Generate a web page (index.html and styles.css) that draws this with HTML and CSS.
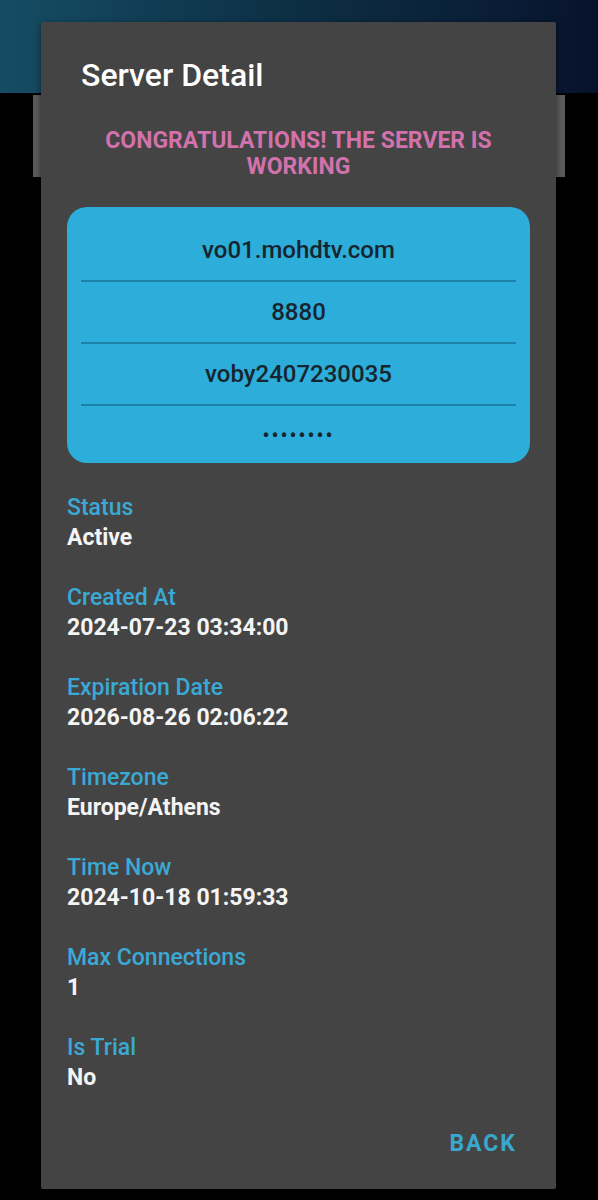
FILE: index.html
```html
<!DOCTYPE html>
<html lang="en">
<head>
    <meta charset="UTF-8">
    <meta name="viewport" content="width=device-width, initial-scale=1.0">
    <title>Server Detail</title>
    <link rel="stylesheet" href="styles.css">
</head>
<body>
    <div class="backdrop">
        <div class="header"></div>
        <div class="behind-card"></div>
    </div>

    <div class="dialog">
        <h1 class="title">Server Detail</h1>
        <p class="success">CONGRATULATIONS! THE SERVER IS WORKING</p>

        <div class="server-box">
            <div class="server-row">vo01.mohdtv.com</div>
            <div class="server-row">8880</div>
            <div class="server-row">voby2407230035</div>
            <div class="server-row password">••••••••</div>
        </div>

        <div class="fields">
            <div class="field">
                <div class="label">Status</div>
                <div class="value">Active</div>
            </div>
            <div class="field">
                <div class="label">Created At</div>
                <div class="value">2024-07-23 03:34:00</div>
            </div>
            <div class="field">
                <div class="label">Expiration Date</div>
                <div class="value">2026-08-26 02:06:22</div>
            </div>
            <div class="field">
                <div class="label">Timezone</div>
                <div class="value">Europe/Athens</div>
            </div>
            <div class="field">
                <div class="label">Time Now</div>
                <div class="value">2024-10-18 01:59:33</div>
            </div>
            <div class="field">
                <div class="label">Max Connections</div>
                <div class="value">1</div>
            </div>
            <div class="field">
                <div class="label">Is Trial</div>
                <div class="value">No</div>
            </div>
        </div>

        <div class="actions">
            <button class="back-btn">BACK</button>
        </div>
    </div>
</body>
</html>
```

FILE: styles.css
```css
body {
    margin: 0;
    background-color: #000;
    font-family: Roboto, "Liberation Sans", sans-serif;
    min-height: 1200px;
}
.header {
    height: 93px;
    background: linear-gradient(90deg, #154d64 0%, #0d3147 45%, #0a1c36 85%, #07122a 100%);
}
.behind-card {
    margin: 2px 33px 0 33px;
    height: 82px;
    background-color: #5a5a5a;
}
.dialog {
    position: absolute;
    top: 22px;
    left: 41px;
    width: 515px;
    box-sizing: border-box;
    padding: 35px 26px 30px 26px;
    background-color: #444444;
    border-radius: 2px;
    box-shadow: 0 2px 6px rgba(0, 0, 0, 0.5);
}
.title {
    margin: 0 0 0 14px;
    font-size: 32px;
    font-weight: 500;
    line-height: 36px;
    color: #fff;
}
.success {
    margin: 35px 0 0 0;
    font-size: 23px;
    font-weight: 700;
    line-height: 26px;
    text-align: center;
    color: #d272ac;
}
.server-box {
    margin-top: 27px;
    background-color: #2cadda;
    border-radius: 20px;
    padding: 13px 14px 0 14px;
}
.server-row {
    height: 60px;
    display: flex;
    align-items: center;
    justify-content: center;
    font-size: 24px;
    font-weight: 500;
    color: #17252e;
    border-bottom: 2px solid #1e82a8;
}
.server-row.password {
    border-bottom: none;
    height: 57px;
    font-size: 20px;
    letter-spacing: 2px;
}
.fields {
    margin-top: 30px;
}
.field {
    margin-bottom: 30px;
}
.field:last-child {
    margin-bottom: 0;
}
.label {
    font-size: 23px;
    font-weight: 500;
    line-height: 30px;
    color: #3ba9d5;
}
.value {
    font-size: 23px;
    font-weight: 700;
    line-height: 30px;
    color: #f4f4f4;
}
.actions {
    display: flex;
    justify-content: flex-end;
    margin-top: 36px;
}
.back-btn {
    background: none;
    border: none;
    padding: 0 13px 0 0;
    font-family: Roboto, "Liberation Sans", sans-serif;
    font-size: 23px;
    font-weight: 700;
    letter-spacing: 2px;
    line-height: 30px;
    color: #3aa7cf;
    cursor: pointer;
}
```
